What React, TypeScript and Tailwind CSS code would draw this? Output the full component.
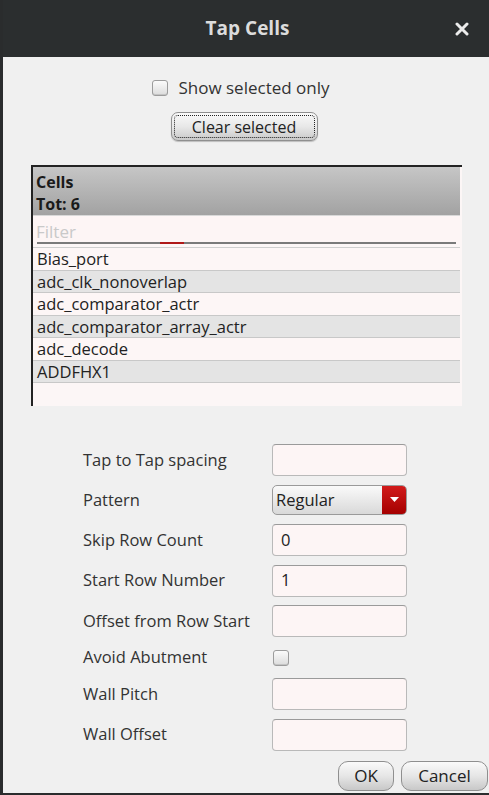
import React from 'react';

const cells = [
  'Bias_port',
  'adc_clk_nonoverlap',
  'adc_comparator_actr',
  'adc_comparator_array_actr',
  'adc_decode',
  'ADDFHX1',
];

const font = { fontFamily: '"Open Sans", "DejaVu Sans", sans-serif' };

const TextBox: React.FC<{ value?: string }> = ({ value }) => (
  <div className="w-[135px] h-[32px] rounded-[4px] border border-[#b9b9b9] border-t-[#9a9a9a] bg-[#fdf5f5] flex items-center px-[8px] text-[16.5px] text-[#222]">
    {value}
  </div>
);

const Check: React.FC = () => (
  <div className="w-[16px] h-[16px] rounded-[3px] border border-[#9c9c9c] bg-gradient-to-b from-[#fbfbfb] to-[#dcdcdc] shadow-[inset_0_-1px_0_#c4c4c4]" />
);

const Row: React.FC<{ label: string; children: React.ReactNode; h?: string }> = ({ label, children, h = 'h-[32px]' }) => (
  <div className={`flex items-center ${h}`}>
    <div className="w-[189px] text-[16.5px] text-[#333]">{label}</div>
    {children}
  </div>
);

export default function App() {
  return (
    <div className="w-[489px] h-[795px] bg-[#f0f0f0] flex flex-col border-l-[3px] border-b-[2px] border-[#2a2c2d] overflow-hidden" style={font}>
      {/* Title bar */}
      <div className="h-[57px] shrink-0 bg-[#2b2e2f] flex items-center relative -ml-[3px]">
        <div className="flex-1 text-center text-[19px] font-bold text-[#dcdcdc] pl-[6px]">Tap Cells</div>
        <svg className="absolute left-[455px] top-[22px]" width="14" height="14" viewBox="0 0 14 14">
          <path d="M2 2 L12 12 M12 2 L2 12" stroke="#ececec" strokeWidth="3" strokeLinecap="round" />
        </svg>
      </div>

      <div className="flex flex-col items-center pt-[22px]">
        <div className="flex items-center gap-[10px] h-[18px] -ml-[10px]">
          <Check />
          <span className="text-[17px] text-[#333]">Show selected only</span>
        </div>
        <div className="mt-[15px] -ml-[4px] w-[147px] h-[29px] rounded-[7px] border border-[#8f8f8f] bg-gradient-to-b from-[#fafafa] via-[#e8e8e8] to-[#c9c9c9] shadow-[0_1px_1px_#bdbdbd] p-[2px]">
          <div className="w-full h-full border border-dotted border-[#222] rounded-[4px] flex items-center justify-center text-[16px] text-[#222] leading-none">
            Clear selected
          </div>
        </div>
      </div>

      {/* Cells table */}
      <div className="ml-[28px] mt-[24px] w-[431px] h-[241px] bg-[#fcf6f6] border-l-[2px] border-t-[2px] border-[#222] flex flex-col">
        <div className="h-[49px] mr-[2px] bg-gradient-to-b from-[#c6c6c6] to-[#a2a2a2] px-[3px] pt-[4px] text-[16px] font-bold text-[#1a1a1a] leading-[22px] border-b border-[#d8d8d8]">
          <div>Cells</div>
          <div>Tot: 6</div>
        </div>
        <div className="h-[28px] mr-[2px] bg-[#fdf5f5] px-[3px] pt-[3px] flex items-center text-[17px] text-[#c9c9c9] relative">
          Filter
          <div className="absolute left-[4px] right-[4px] bottom-0 h-[2px] bg-[#7a7a7a]" />
          <div className="absolute left-[127px] w-[24px] bottom-0 h-[2px] bg-[#b01818]" />
        </div>
        <div className="mt-[3px] mr-[2px] border-t border-[#cfcfcf]">
          {cells.map((c, i) => (
            <div
              key={c}
              className={`h-[22.5px] flex items-center px-[4px] pt-[2px] text-[16.5px] text-[#222] border-b border-[#c8c8c8] ${i % 2 === 1 ? 'bg-[#e4e4e4]' : 'bg-[#fdf6f6]'}`}
            >
              {c}
            </div>
          ))}
        </div>
      </div>

      {/* Form */}
      <div className="ml-[80px] mt-[38px] flex flex-col gap-[8.5px]">
        <Row label="Tap to Tap spacing"><TextBox /></Row>
        <Row label="Pattern" h="h-[31px]">
          <div className="w-[135px] h-[30px] rounded-[5px] border border-[#9a9a9a] bg-gradient-to-b from-[#fafafa] to-[#d9d9d9] flex overflow-hidden">
            <div className="flex-1 flex items-center px-[3px] text-[16.5px] text-[#222]">Regular</div>
            <div className="w-[24px] bg-gradient-to-b from-[#d11a1a] to-[#a50000] flex items-center justify-center">
              <svg width="9" height="6" viewBox="0 0 9 6"><path d="M0 0 L9 0 L4.5 5 Z" fill="#fff" /></svg>
            </div>
          </div>
        </Row>
        <Row label="Skip Row Count"><TextBox value="0" /></Row>
        <Row label="Start Row Number"><TextBox value="1" /></Row>
        <Row label="Offset from Row Start"><TextBox /></Row>
        <Row label="Avoid Abutment" h="h-[24px]">
          <div className="ml-[1px]"><Check /></div>
        </Row>
        <Row label="Wall Pitch"><TextBox /></Row>
        <Row label="Wall Offset"><TextBox /></Row>
      </div>

      <div className="flex justify-end gap-[7px] pr-[1px] mt-[10px]">
        <div className="w-[56px] h-[30px] rounded-[10px] border border-[#8f8f8f] bg-gradient-to-b from-[#fafafa] via-[#e6e6e6] to-[#c8c8c8] flex items-center justify-center text-[17px] text-[#222]">OK</div>
        <div className="w-[87px] h-[30px] rounded-[10px] border border-[#8f8f8f] bg-gradient-to-b from-[#fafafa] via-[#e6e6e6] to-[#c8c8c8] flex items-center justify-center text-[17px] text-[#222]">Cancel</div>
      </div>
    </div>
  );
}
